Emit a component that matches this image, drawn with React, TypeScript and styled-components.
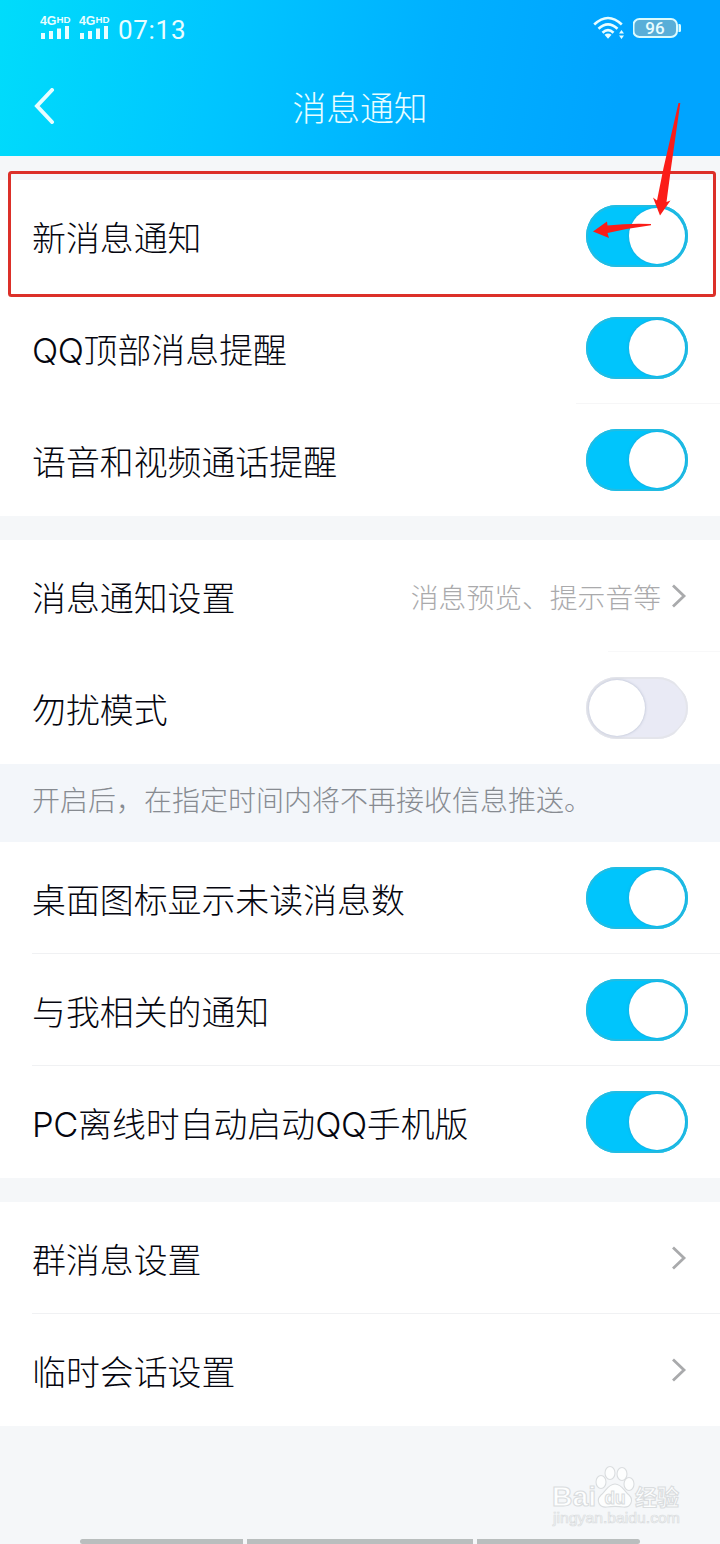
import React from 'react';
import styled, { createGlobalStyle } from 'styled-components';

const GlobalStyle = createGlobalStyle`
  * { box-sizing: border-box; }
  body {
    margin: 0;
    background: #f4f7f9;
    font-family: "Noto Sans CJK SC", sans-serif;
    font-weight: 300;
  }
`;

const Screen = styled.div`
  position: relative;
  width: 720px;
  height: 1544px;
  overflow: hidden;
  display: flex;
  flex-direction: column;
  background: #f5f7f9;
`;

const Header = styled.header`
  flex: none;
  height: 156px;
  display: flex;
  flex-direction: column;
  color: #e8fdff;
  background: linear-gradient(100deg, #00dcfb 0%, #00c6ff 30%, #00b0ff 60%, #00a4ff 85%);
`;

const StatusBar = styled.div`
  height: 56px;
  padding: 0 39px 0 40px;
  display: flex;
  align-items: center;
  justify-content: space-between;
`;

const StatusGroup = styled.div`
  display: flex;
  align-items: center;
  gap: 8px;
`;

const Clock = styled.span`
  font: 400 26px/32px Roboto, sans-serif;
  letter-spacing: 0.7px;
  margin-top: 4px;
`;

const TitleBar = styled.div`
  height: 100px;
  padding: 0 33px;
  display: grid;
  grid-template-columns: 40px 1fr 40px;
  align-items: center;
`;

const BackIcon = styled.svg`
  margin-bottom: 1px;
`;

const Title = styled.h1`
  margin: 2px 0 0;
  text-align: center;
  font-size: 33.8px;
  line-height: 48px;
  font-weight: 300;
`;

const Group = styled.section<{ $gap: number }>`
  flex: none;
  margin-top: ${(p) => p.$gap}px;
  background: #fff;
`;

interface Divider {
  color: string;
  width: number;
}

const Row = styled.div<{ $divider?: Divider }>`
  height: 112px;
  padding: 0 32px;
  display: flex;
  align-items: center;
  justify-content: space-between;
  ${(p) =>
    p.$divider &&
    `background: linear-gradient(${p.$divider.color}, ${p.$divider.color}) right bottom / ${p.$divider.width}px 1px no-repeat;`}
`;

const Label = styled.span`
  margin-top: 1px;
  font-size: 33.9px;
  line-height: 50px;
  color: #05060f;
  white-space: nowrap;
`;

const Latin = styled.span`
  font-family: Inter, sans-serif;
  font-size: 34.5px;
  line-height: 1;
  letter-spacing: -0.4px;
`;

const Trailing = styled.span`
  display: flex;
  align-items: center;
  gap: 10px;
`;

const Detail = styled.span`
  font-size: 27.8px;
  line-height: 40px;
  color: #aaaaac;
  white-space: nowrap;
`;

const Track = styled.span<{ $on: boolean }>`
  width: 102px;
  height: 62px;
  padding: 3px;
  border-radius: 31px;
  display: flex;
  justify-content: ${(p) => (p.$on ? 'flex-end' : 'flex-start')};
  background: ${(p) => (p.$on ? '#00c5fc' : '#e9eaf5')};
  box-shadow: inset 0 0 0 2px ${(p) => (p.$on ? '#22bce2' : '#e4e5eb')};
  ${(p) => !p.$on && 'clip-path: polygon(0 0, 84px 0, 102px 21px, 102px 41px, 84px 62px, 0 62px);'}
`;

const Knob = styled.span`
  width: 56px;
  height: 56px;
  border-radius: 50%;
  background: #fff;
  box-shadow: 0 0 3px rgba(90, 110, 140, 0.4);
`;

const Note = styled.p`
  flex: none;
  margin: 0;
  height: 78px;
  padding: 0 32px 8px;
  display: flex;
  align-items: center;
  font-size: 28px;
  color: #878b91;
  background: #f3f6fa;
  white-space: nowrap;
`;

const Overlay = styled.svg`
  position: absolute;
  left: 0;
  top: 0;
  pointer-events: none;
`;

const NavHandles = styled.div`
  position: absolute;
  left: 80px;
  top: 1539px;
  display: grid;
  grid-template-columns: 163px 226px 163px;
  gap: 4px;
`;

const Handle = styled.span`
  height: 5px;
  background: #b9bebe;
  &:first-child { border-radius: 3px 0 0 3px; }
  &:last-child { border-radius: 0 3px 3px 0; }
`;

const Signal = () => (
  <svg width="31" height="26" viewBox="0 0 31 26" fill="currentColor">
    <text x="0" y="10" fontFamily="Liberation Sans" fontWeight="700" fontSize="12.5" textLength="16.5" lengthAdjust="spacingAndGlyphs">4G</text>
    <text x="16.500" y="7.500" fontFamily="Liberation Sans" fontWeight="700" fontSize="9.500" textLength="14" lengthAdjust="spacingAndGlyphs">HD</text>
    <path d="M1 18h4v6H1zM9 16h4v8H9zM17 13.500h4V24h-4zM25 11h4v13h-4z" />
  </svg>
);

const Wifi = () => (
  <svg width="32" height="24" viewBox="0 0 32 24" fill="none" stroke="currentColor" strokeWidth="2.6">
    <path d="M1.200 8.500Q15 -4.500 28.800 8.500M5.500 12.800Q15 4 24.500 12.800M9.500 16.800Q15 11.500 20.500 16.800" />
    <path d="M11.500 18.800Q15 16 18.500 18.800L15 22.800Z" fill="currentColor" stroke="none" />
    <path d="M26 17.500l2.500-3.500L31 17.500zM26 19.500l2.500 3.500L31 19.500z" fill="currentColor" stroke="none" />
  </svg>
);

const Battery = () => (
  <svg width="48" height="20" viewBox="0 0 48 20">
    <rect x="0.500" y="1" width="43.500" height="18" rx="6" fill="#58aed8" stroke="#d9fbff" strokeWidth="2" />
    <path d="M45.500 6h1.200q1.300 0 1.300 1.500v5q0 1.500-1.300 1.500h-1.200z" fill="#d9fbff" />
    <text x="22" y="16" textAnchor="middle" fontFamily="Roboto" fontWeight="500" fontSize="17" fill="#e8fdff">96</text>
  </svg>
);

const Chevron = () => (
  <svg width="17" height="24" viewBox="0 0 17 24" fill="none" stroke="#a9aaac" strokeWidth="2.8">
    <path d="M2 1.500L13 12L2 22.500" />
  </svg>
);

const Toggle = ({ on = false }: { on?: boolean }) => (
  <Track $on={on} role="switch" aria-checked={on}>
    <Knob />
  </Track>
);

const RowLabel = ({ text }: { text: string }) => (
  <Label>
    {text.split(/([A-Z]+)/).map((part, i) => (/^[A-Z]+$/.test(part) ? <Latin key={i}>{part}</Latin> : part))}
  </Label>
);

const SwitchRow = ({ label, on, divider }: { label: string; on?: boolean; divider?: Divider }) => (
  <Row $divider={divider}>
    <RowLabel text={label} />
    <Toggle on={on} />
  </Row>
);

const LinkRow = ({ label, detail, divider }: { label: string; detail?: string; divider?: Divider }) => (
  <Row $divider={divider}>
    <RowLabel text={label} />
    <Trailing>
      {detail && <Detail>{detail}</Detail>}
      <Chevron />
    </Trailing>
  </Row>
);

const Watermark = () => (
  <g fill="#fdfefe" stroke="#dadddf" strokeWidth="1.100" fontFamily="Liberation Sans" fontWeight="700">
    <text x="552" y="1505.500" fontSize="28" textLength="44" lengthAdjust="spacingAndGlyphs">Bai</text>
    <ellipse cx="601" cy="1482" rx="5" ry="6.500" />
    <ellipse cx="610" cy="1473" rx="5" ry="6.500" />
    <ellipse cx="622" cy="1474" rx="5" ry="6.500" />
    <ellipse cx="629" cy="1484" rx="5" ry="6.500" />
    <path d="M615 1484c-7 0-9 7-14 11-6 6-1 13 6 12 6-1 10-1 16 0 8 1 11-7 6-12-5-4-7-11-14-11z" />
    <text x="604.500" y="1504" fontSize="18" textLength="21" lengthAdjust="spacingAndGlyphs">du</text>
    <text x="635" y="1505" fontSize="22" fontFamily="Noto Sans CJK SC" textLength="44">经验</text>
    <text x="553" y="1523" fontSize="14" fontWeight="400" strokeWidth="0.700" textLength="127" lengthAdjust="spacingAndGlyphs">jingyan.baidu.com</text>
  </g>
);

const hairline: Divider = { color: '#f0f1f3', width: 688 };

export default function App() {
  return (
    <>
      <GlobalStyle />
      <Screen>
        <Header>
          <StatusBar>
            <StatusGroup>
              <Signal />
              <Signal />
              <Clock>07:13</Clock>
            </StatusGroup>
            <StatusGroup>
              <Wifi />
              <Battery />
            </StatusGroup>
          </StatusBar>
          <TitleBar>
            <BackIcon width="24" height="36" viewBox="0 0 24 36" fill="none" stroke="currentColor" strokeWidth="4" strokeLinecap="round">
              <path d="M19 2L4 18L19 34" />
            </BackIcon>
            <Title>消息通知</Title>
          </TitleBar>
        </Header>

        <Group $gap={24}>
          <SwitchRow label="新消息通知" on />
          <SwitchRow label="QQ顶部消息提醒" on divider={{ color: '#f6f6f7', width: 144 }} />
          <SwitchRow label="语音和视频通话提醒" on />
        </Group>

        <Group $gap={24}>
          <LinkRow label="消息通知设置" detail="消息预览、提示音等" divider={{ color: '#f8f8f9', width: 112 }} />
          <SwitchRow label="勿扰模式" />
        </Group>
        <Note>开启后，在指定时间内将不再接收信息推送。</Note>

        <Group $gap={0}>
          <SwitchRow label="桌面图标显示未读消息数" on divider={hairline} />
          <SwitchRow label="与我相关的通知" on divider={hairline} />
          <SwitchRow label="PC离线时自动启动QQ手机版" on />
        </Group>

        <Group $gap={24}>
          <LinkRow label="群消息设置" divider={hairline} />
          <LinkRow label="临时会话设置" />
        </Group>

        <NavHandles>
          <Handle />
          <Handle />
          <Handle />
        </NavHandles>
        <Overlay width="720" height="1544" viewBox="0 0 720 1544">
          <rect x="9.500" y="172.500" width="705" height="123" rx="2" fill="none" stroke="#dc3029" strokeWidth="3" />
          <path d="M678.500 103H680.300L671 168L666.500 202L670.500 200.500L660 215.500L653 197.500L657 200.500L663.500 168Z" fill="#fb1d18" />
          <path d="M593 231.500L607 221.500L607.500 225.500Q630 223 651 224V225.300Q630 228 607.500 233L609 238Z" fill="#fb1d18" />
          <Watermark />
        </Overlay>
      </Screen>
    </>
  );
}
